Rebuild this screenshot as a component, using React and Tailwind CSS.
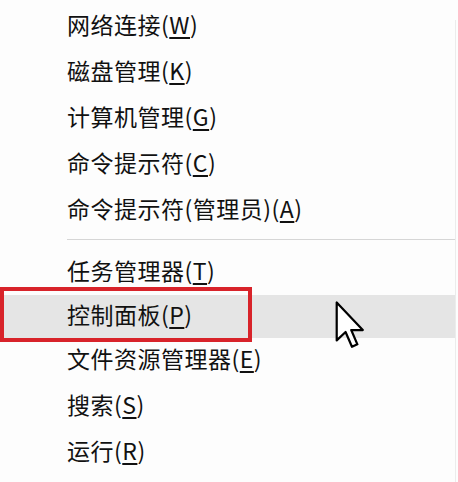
import React from 'react';

const cjk = { fontFamily: '"Microsoft YaHei", "Noto Sans CJK SC", "Noto Sans", sans-serif' };

// one menu entry: label + accelerator key (underlined, inside parens)
function Item({ label, hot, active }) {
  return (
    <div
      className={
        'flex items-center pl-[67px] mr-[3px] pb-[5px] ' +
        (active ? 'h-[43px] bg-[#e5e5e5]' : 'h-[46px]')
      }
    >
      <span className="text-[23px] leading-none text-[#111] whitespace-nowrap tracking-[0.5px]">
        {label}(<span className="underline underline-offset-[3px] decoration-[1.5px]">{hot}</span>)
      </span>
    </div>
  );
}

function Cursor() {
  return (
    <svg width="30" height="48" viewBox="0 0 12 19.5" className="absolute left-[335px] top-[301px]">
      <path
        d="M0.6 0.6 L0.6 16 L4.2 12.6 L6.8 18.6 L9 17.6 L6.5 11.8 L11.2 11.8 Z"
        fill="#fff"
        stroke="#000"
        strokeWidth="0.9"
        strokeLinejoin="round"
      />
    </svg>
  );
}

export default function App() {
  return (
    <div className="relative w-[458px] h-[482px] bg-[#fdfdfd] overflow-hidden" style={cjk}>
      <div className="pt-[4px]">
        <Item label="网络连接" hot="W" />
        <Item label="磁盘管理" hot="K" />
        <Item label="计算机管理" hot="G" />
        <Item label="命令提示符" hot="C" />
        <Item label="命令提示符(管理员)" hot="A" />

        <div className="ml-[67px] mr-[3px] mt-[5px] mb-[11px] h-px bg-[#d6d6d6]" />

        <div className="h-[44px] flex items-center pl-[67px] pb-[5px]">
          <span className="text-[23px] leading-none text-[#111] whitespace-nowrap tracking-[0.5px]">
            任务管理器(<span className="underline underline-offset-[3px] decoration-[1.5px]">T</span>)
          </span>
        </div>
        <Item label="控制面板" hot="P" active />
        <Item label="文件资源管理器" hot="E" />
        <Item label="搜索" hot="S" />
        <Item label="运行" hot="R" />
      </div>

      {/* red annotation box round 控制面板 */}
      <div className="absolute left-0 top-[287px] w-[252px] h-[55px] border-[4px] border-[#d8232a]" />

      <Cursor />

      <div className="absolute right-[2px] top-[20px] bottom-0 w-px bg-[#ececec]" />
    </div>
  );
}
